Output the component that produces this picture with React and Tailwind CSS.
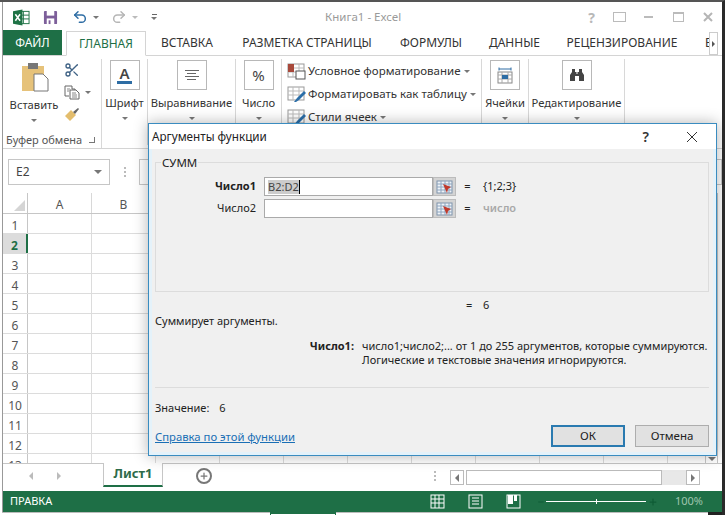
import { Undo2, Redo2, Scissors, Plus, Minus } from 'lucide-react';

const tabs = [
  { name: 'ВСТАВКА', cls: 'w-[82px]' },
  { name: 'РАЗМЕТКА СТРАНИЦЫ', cls: 'w-[158px]' },
  { name: 'ФОРМУЛЫ', cls: 'w-[90px]' },
  { name: 'ДАННЫЕ', cls: 'w-[77px]' },
  { name: 'РЕЦЕНЗИРОВАНИЕ', cls: 'w-[138px]' },
];

const Caret = ({ className = '' }) => (
  <span className={`block w-0 h-0 border-x-[3px] border-x-transparent border-t-[3px] border-t-[#777] ${className}`} />
);

const SheetIcon = ({ children }) => (
  <svg width="19" height="17" viewBox="0 0 19 17" className="shrink-0 mr-[2px]">
    <rect x="1" y="1" width="16" height="13" fill="#fff" stroke="#999" />
    <path d="M1 5h16M1 9h16M6 1v13M12 1v13" stroke="#bbb" fill="none" />
    {children}
  </svg>
);

const Brush = () => <path d="M7 16l3-4 7-7 2 2-7 7-3 2z" fill="#2b6ea8" />;

const BigGroup = ({ label, width, children }) => (
  <div className={`flex flex-col items-center shrink-0 border-r border-[#d8d8d8] h-[86px] ${width}`}>
    <div className="w-[30px] h-[30px] mt-[1px] border border-[#b8b8b8] flex items-center justify-center">
      {children}
    </div>
    <span className="mt-[5px] text-[11.2px] leading-[16px] text-[#333] whitespace-nowrap">{label}</span>
    <Caret className="mt-[6px]" />
  </div>
);

const Field = ({ label, bold, value, result, muted }) => (
  <div className="flex items-center h-[19px]">
    <span className={`w-[108px] text-right pr-[8px] ${bold ? 'font-bold' : ''}`}>{label}</span>
    <div className="w-[169px] h-[19px] bg-white border border-[#aaa] flex items-center pl-[3px] text-[#444] text-[11px]">
      {value && <span className="bg-[#ccc] leading-[14px]">{value}</span>}
      {value && <span className="w-px h-[14px] bg-black" />}
    </div>
    <div className="w-[23px] h-[19px] bg-[#d4d4d4] border border-[#bcbcbc] flex items-center justify-center">
      <svg width="17" height="14" viewBox="0 0 17 14">
        <rect x="1" y="1" width="15" height="12" fill="#eef3f8" stroke="#7f93ab" />
        <path d="M1 4h15M1 7h15M1 10h15M5 1v12M9 1v12M13 1v12" stroke="#8ea6c0" />
        <path d="M7 4l8 3-3 2-1 4z" fill="#c0392b" />
      </svg>
    </div>
    <span className="ml-[3px] w-[17px] text-center">=</span>
    <span className={`ml-[7px] ${muted ? 'text-[#a8a8a8] font-semibold' : ''}`}>{result}</span>
  </div>
);

const Dialog = () => (
  <div className="absolute left-[148px] top-[121px] w-[569px] h-[333px] bg-[#f0f0f0] border border-[#3a8cc0] shadow-[0_0_14px_rgba(0,0,0,0.3)] text-[11px] text-[#222] flex flex-col">
    <div className="h-[25px] bg-white flex items-center pl-[3px] shrink-0">
      <span className="text-[11.7px] text-[#222]">Аргументы функции</span>
      <span className="ml-auto text-[14px] font-semibold text-[#333]">?</span>
      <svg width="12" height="12" viewBox="0 0 12 12" className="ml-[37px] mr-[18px]">
        <path d="M1 1l10 10M11 1L1 11" stroke="#333" fill="none" />
      </svg>
    </div>
    <div className="flex-1 flex flex-col pl-[3px] pr-[4px] border-x-[3px] border-b-[3px] border-[#e4f2fa]">
      <fieldset className="mt-[7px] h-[136px] border border-[#dcdcdc]">
        <legend className="ml-[5px] px-[1px] text-[11.5px] leading-[13px]">СУММ</legend>
        <div className="flex flex-col gap-[3px] mt-[8px]">
          <Field label="Число1" bold value="B2:D2" result="{1;2;3}" />
          <Field label="Число2" result="число" muted />
        </div>
      </fieldset>
      <div className="mt-[5px] h-[16px] pl-[311px] flex">
        <span className="w-[17px]">=</span>
        <span>6</span>
      </div>
      <p className="leading-[16px]">Суммирует аргументы.</p>
      <div className="flex mt-[10px] leading-[14px]">
        <span className="w-[199px] text-right font-bold shrink-0">Число1:</span>
        <p className="ml-[8px] whitespace-nowrap">
          число1;число2;... от 1 до 255 аргументов, которые суммируются.
          <br />
          Логические и текстовые значения игнорируются.
        </p>
      </div>
      <div className="mt-[20px] border-t border-[#dcdcdc]" />
      <p className="mt-[13px] leading-[14px]">
        Значение:<span className="ml-[10px]">6</span>
      </p>
      <div className="mt-[10px] flex items-center">
        <a className="text-[#1a6fb5] underline text-[11.3px] mt-[2px]">Справка по этой функции</a>
        <button className="ml-auto w-[74px] h-[22px] bg-[#e1e1e1] border-2 border-[#2a7ab0] text-[11.5px]">ОК</button>
        <button className="ml-[10px] w-[74px] h-[22px] bg-[#e1e1e1] border border-[#adadad] text-[11.5px]">Отмена</button>
      </div>
    </div>
  </div>
);

export default function App() {
  const rows = [1, 2, 3, 4, 5, 6, 7, 8, 9, 10, 11, 12, 13];
  const cols = ['A', 'B', 'C', 'D', 'E', 'F', 'G', 'H', 'I', 'J', 'K'];

  return (
    <div className="relative w-[725px] h-[515px] overflow-hidden bg-white font-['Noto_Sans','Open_Sans',sans-serif] border-t-2 border-t-[#555] border-r-[3px] border-r-[#2a2a2a] pl-[2px]">
      <div className="border-l border-[#999] h-[510px]">
        <div className="h-[29px] pt-[1px] flex items-center">
          <svg width="17" height="17" viewBox="0 0 18 17" className="ml-[10px]">
            <rect x="6" y="2" width="11" height="13" fill="#fff" stroke="#1f7346" />
            <path d="M11 2v13M6 6h11M6 10h11" stroke="#1f7346" />
            <path d="M0 2l10-2v17L0 15z" fill="#1f7346" />
            <path d="M2.5 5l5 7M7.5 5l-5 7" stroke="#fff" strokeWidth="1.6" />
          </svg>
          <svg width="15" height="15" viewBox="0 0 16 16" className="ml-[13px]">
            <rect x="1" y="1" width="14" height="14" rx="1" fill="#7d5f9a" />
            <rect x="4" y="1" width="8" height="5" fill="#fff" />
            <rect x="4" y="9" width="8" height="6" fill="#fff" />
            <rect x="6" y="11" width="2" height="4" fill="#7d5f9a" />
          </svg>
          <Undo2 size={16} strokeWidth={2.2} className="ml-[14px] text-[#2e6da4]" />
          <Caret className="ml-[5px]" />
          <Redo2 size={16} strokeWidth={2.2} className="ml-[12px] text-[#b5b5b5]" />
          <Caret className="ml-[5px] opacity-50" />
          <div className="ml-[13px] flex flex-col items-center gap-[2px]">
            <span className="w-[5px] h-px bg-[#666]" />
            <Caret />
          </div>
          <span className="ml-[168px] text-[11.5px] text-[#9a9a9a]">Книга1 - Excel</span>
          <div className="ml-auto flex items-center text-[#b8b8b8]">
            <span className="text-[14px] font-bold">?</span>
            <span className="ml-[18px] w-[13px] h-[10px] border border-[#bbb]" />
            <span className="ml-[18px] w-[9px] h-[2px] bg-[#bbb]" />
            <span className="ml-[20px] w-[11px] h-[10px] border border-[#bbb] border-t-2" />
            <svg width="10" height="10" viewBox="0 0 10 10" className="ml-[19px] mr-[9px]">
              <path d="M1 1l8 8M9 1L1 9" stroke="#b5b5b5" strokeWidth="2" />
            </svg>
          </div>
        </div>

        <div className="h-[25px] flex items-end border-b border-[#d4d4d4] text-[12px] text-[#333] relative">
          <div className="w-[59px] h-[25px] bg-[#1e6f46] text-white flex items-center justify-center">ФАЙЛ</div>
          <div className="ml-[4px] w-[80px] h-[25px] bg-white border border-[#d4d4d4] border-b-white -mb-px flex items-center justify-center text-[#1e6f46]">ГЛАВНАЯ</div>
          {tabs.map((t) => (
            <div key={t.name} className={`h-[25px] shrink-0 flex items-center justify-center whitespace-nowrap ${t.cls}`}>{t.name}</div>
          ))}
          <span className="ml-[14px] w-[6px] h-[25px] leading-[25px] overflow-hidden">Е</span>
          <div className="absolute right-[4px] top-[1px] w-[9px] h-[23px] bg-white border border-[#ccc] flex items-center justify-center">
            <span className="w-0 h-0 border-y-[3px] border-y-transparent border-l-[3px] border-l-[#555]" />
          </div>
        </div>

        <div className="h-[93px] flex border-b border-[#d4d4d4] pt-[3px]">
          <div className="w-[99px] shrink-0 h-[89px] border-r border-[#d8d8d8] relative">
            <div className="flex pl-[6px]">
              <div className="flex flex-col items-center w-[50px]">
                <svg width="30" height="30" viewBox="0 0 30 30" className="mt-[3px]">
                  <rect x="3" y="4" width="22" height="25" fill="#e6c27a" />
                  <rect x="9" y="1" width="10" height="6" fill="#777" />
                  <path d="M15 12h9l5 5v12H15z" fill="#fff" stroke="#777" />
                </svg>
                <span className="mt-[5px] text-[11.2px] leading-[16px] text-[#333]">Вставить</span>
                <Caret className="mt-[6px]" />
              </div>
              <div className="flex flex-col ml-[5px] mt-[3px]">
                <Scissors size={16} className="text-[#3f6285]" />
                <div className="flex items-center mt-[7px]">
                  <svg width="16" height="15" viewBox="0 0 16 15">
                    <path d="M1 1h7v3h3v2M1 1v10h4" fill="#fff" stroke="#666" />
                    <path d="M6 5h6l3 3v6H6z" fill="#fff" stroke="#666" />
                    <path d="M8 8h4M8 10h5M8 12h5M3 4h3M3 6h2" stroke="#888" />
                  </svg>
                  <Caret className="ml-[5px]" />
                </div>
                <svg width="16" height="15" viewBox="0 0 16 15" className="mt-[7px]">
                  <path d="M1 9l6-6 5 5-6 6z" fill="#e3bd6d" />
                  <path d="M9 5l5-4 1 1-4 5z" fill="#666" />
                </svg>
              </div>
            </div>
            <div className="absolute left-[3px] top-[74px] flex items-center text-[11px] leading-[14px] text-[#555] whitespace-nowrap">
              Буфер обмена
              <span className="ml-[7px] w-[6px] h-[6px] border-r border-b border-[#777]" />
            </div>
          </div>

          <BigGroup label="Шрифт" width="w-[46px]">
            <div className="flex flex-col items-center text-[15px] leading-[15px] font-semibold text-[#444]">
              A
              <span className="w-[15px] h-[3px] bg-[#2e6da4]" />
            </div>
          </BigGroup>
          <BigGroup label="Выравнивание" width="w-[88px]">
            <div className="flex flex-col items-center gap-[2px]">
              <span className="w-[14px] h-px bg-[#666]" />
              <span className="w-[9px] h-px bg-[#666]" />
              <span className="w-[14px] h-px bg-[#666]" />
              <span className="w-[9px] h-px bg-[#666]" />
            </div>
          </BigGroup>
          <BigGroup label="Число" width="w-[46px]">
            <span className="text-[15px] text-[#444]">%</span>
          </BigGroup>

          <div className="w-[200px] shrink-0 h-[86px] border-r border-[#d8d8d8] pl-[5px] pt-[3px] flex flex-col gap-[5px] text-[11.5px] leading-[18px] text-[#333]">
            <div className="flex items-center whitespace-nowrap">
              <SheetIcon>
                <rect x="1" y="1" width="6" height="8" fill="#a8493b" />
                <rect x="9" y="8" width="9" height="8" fill="#fff" stroke="#555" />
              </SheetIcon>
              Условное форматирование
              <Caret className="ml-[3px]" />
            </div>
            <div className="flex items-center whitespace-nowrap">
              <SheetIcon><Brush /></SheetIcon>
              Форматировать как таблицу
              <Caret className="ml-[3px]" />
            </div>
            <div className="flex items-center whitespace-nowrap">
              <SheetIcon><Brush /></SheetIcon>
              Стили ячеек
              <Caret className="ml-[3px]" />
            </div>
          </div>

          <BigGroup label="Ячейки" width="w-[47px]">
            <svg width="16" height="17" viewBox="0 0 16 17">
              <path d="M2 2h12M2 .5v3M14 .5v3" stroke="#2e6da4" />
              <rect x="1" y="5" width="14" height="11" fill="#fff" stroke="#888" />
              <path d="M1 8h14M1 12h14M5 5v11M11 5v11" stroke="#aaa" />
              <rect x="5" y="8" width="6" height="4" fill="#2e6da4" />
            </svg>
          </BigGroup>
          <BigGroup label="Редактирование" width="w-[96px]">
            <svg width="16" height="14" viewBox="0 0 16 14">
              <path d="M3 1h3v3h1.5v2h1V4H10V1h3v3l2 3v6h-5V8H6v5H1V7l2-3z" fill="#444" />
            </svg>
          </BigGroup>
        </div>

        <div className="mt-[10px] h-[26px] flex items-center">
          <div className="ml-[5px] w-[102px] h-[26px] border border-[#c6c6c6] flex items-center pl-[7px] text-[12px] text-[#444]">
            E2
            <Caret className="ml-auto mr-[7px] border-x-[4px] border-t-[4px]" />
          </div>
          <div className="ml-[14px] flex flex-col gap-[2px]">
            <span className="w-[2px] h-[2px] bg-[#bbb]" />
            <span className="w-[2px] h-[2px] bg-[#bbb]" />
            <span className="w-[2px] h-[2px] bg-[#bbb]" />
          </div>
          <div className="ml-[13px] flex-1 h-[26px] border border-[#c6c6c6]" />
        </div>

        <div className="mt-[8px] h-[270px] flex text-[12px] text-[#555]">
          <div className="w-[697px] overflow-hidden shrink-0">
            <div className="flex h-[21px] border-b border-[#c6c6c6]">
              <div className="w-[25px] shrink-0 border-r border-[#c6c6c6] flex items-end justify-end pr-[2px] pb-[2px]">
                <span className="w-0 h-0 border-l-[11px] border-l-transparent border-b-[11px] border-b-[#d5d5d5]" />
              </div>
              {cols.map((c) => (
                <div key={c} className="w-[64px] shrink-0 border-r border-[#d8d8d8] flex items-center justify-center pt-[3px]">{c}</div>
              ))}
            </div>
            {rows.map((r) => (
              <div key={r} className="flex h-[20px] border-b border-[#dcdcdc]">
                <div className={`w-[25px] shrink-0 flex items-center justify-center pt-[4px] ${r === 2 ? 'bg-[#dcdcdc] text-[#1e6f46] font-bold border-r-2 border-r-[#1e6f46]' : 'border-r border-[#c6c6c6]'}`}>{r}</div>
                {cols.map((c) => (
                  <div key={c} className="w-[64px] shrink-0 border-r border-[#dcdcdc]" />
                ))}
              </div>
            ))}
          </div>
          <div className="ml-[5px] w-[13px] border-x border-[#c6c6c6] flex flex-col justify-end items-center pb-[2px]">
            <Caret className="border-x-[4px] border-t-[4px]" />
          </div>
        </div>

        <div className="h-[25px] flex items-start border-t border-[#c6c6c6] bg-white">
          <span className="ml-[26px] mt-[8px] w-0 h-0 border-y-[4px] border-y-transparent border-r-[4px] border-r-[#bbb]" />
          <span className="ml-[24px] mt-[8px] w-0 h-0 border-y-[4px] border-y-transparent border-l-[4px] border-l-[#bbb]" />
          <div className="ml-[42px] -mt-px w-[60px] h-[24px] shrink-0 bg-white border-x border-[#c6c6c6] border-b-2 border-b-[#1e6f46] flex items-center justify-center text-[13px] font-bold text-[#2e6b4a]">
            Лист1
          </div>
          <div className="ml-[33px] mt-[4px] w-[16px] h-[16px] shrink-0 rounded-full border-2 border-[#777] flex items-center justify-center">
            <Plus size={10} strokeWidth={3} className="text-[#777]" />
          </div>
          <div className="ml-[222px] mt-[7px] flex flex-col gap-[2px]">
            <span className="w-[2px] h-[2px] bg-[#bbb]" />
            <span className="w-[2px] h-[2px] bg-[#bbb]" />
            <span className="w-[2px] h-[2px] bg-[#bbb]" />
          </div>
          <div className="ml-[14px] mt-[6px] flex items-center h-[15px]">
            <span className="w-[14px] h-[15px] border border-[#bbb] flex items-center justify-center">
              <span className="w-0 h-0 border-y-[4px] border-y-transparent border-r-[4px] border-r-[#777]" />
            </span>
            <span className="ml-[2px] w-[196px] h-[15px] bg-white border border-[#bbb]" />
            <span className="w-[24px] h-[15px] bg-[#e8e8e8]" />
            <span className="w-[14px] h-[15px] border border-[#bbb] flex items-center justify-center">
              <span className="w-0 h-0 border-y-[4px] border-y-transparent border-l-[4px] border-l-[#777]" />
            </span>
          </div>
        </div>

        <div className="mt-[3px] h-[21px] bg-[#1e6f46] flex items-center text-[11px] text-white pl-[7px] pr-[19px]">
          <span className="w-[44px] shrink-0">ПРАВКА</span>
          <svg width="15" height="15" viewBox="0 0 15 15" className="ml-[376px] shrink-0">
            <rect x="1" y="1" width="13" height="13" fill="none" stroke="#fff" />
            <path d="M1 5h13M1 9h13M5 1v13M9 1v13" stroke="#fff" />
          </svg>
          <svg width="15" height="15" viewBox="0 0 15 15" className="ml-[23px] shrink-0">
            <rect x="1" y="1" width="13" height="13" fill="none" stroke="#fff" />
            <path d="M4 4h7M4 7h7M4 10h7" stroke="#fff" />
          </svg>
          <svg width="15" height="15" viewBox="0 0 15 15" className="ml-[23px] shrink-0">
            <rect x="1" y="1" width="13" height="13" fill="#1e6f46" stroke="#fff" />
            <path d="M2 1h5v9H2zM8 1h3v6H8z" fill="#fff" />
          </svg>
          <Minus size={8} strokeWidth={3} className="ml-[16px] shrink-0 text-[#0f5c36]" />
          <span className="ml-[1px] relative w-[100px] shrink-0 h-px bg-white">
            <span className="absolute left-[50px] -top-[2px] w-px h-[5px] bg-white" />
          </span>
          <Plus size={10} strokeWidth={3} className="ml-[2px] shrink-0 text-[#0f5c36]" />
          <span className="ml-auto text-[#9fc5ae]">100%</span>
        </div>
      </div>
      <div className="h-[3px] flex bg-white border-t border-[#bbb]">
        <span className="ml-[268px] w-[66px] border-t-2 border-x border-[#1e6f46] -mt-px" />
        <span className="ml-auto w-[14px] bg-[#222] -mt-px" />
      </div>
      <Dialog />
    </div>
  );
}
